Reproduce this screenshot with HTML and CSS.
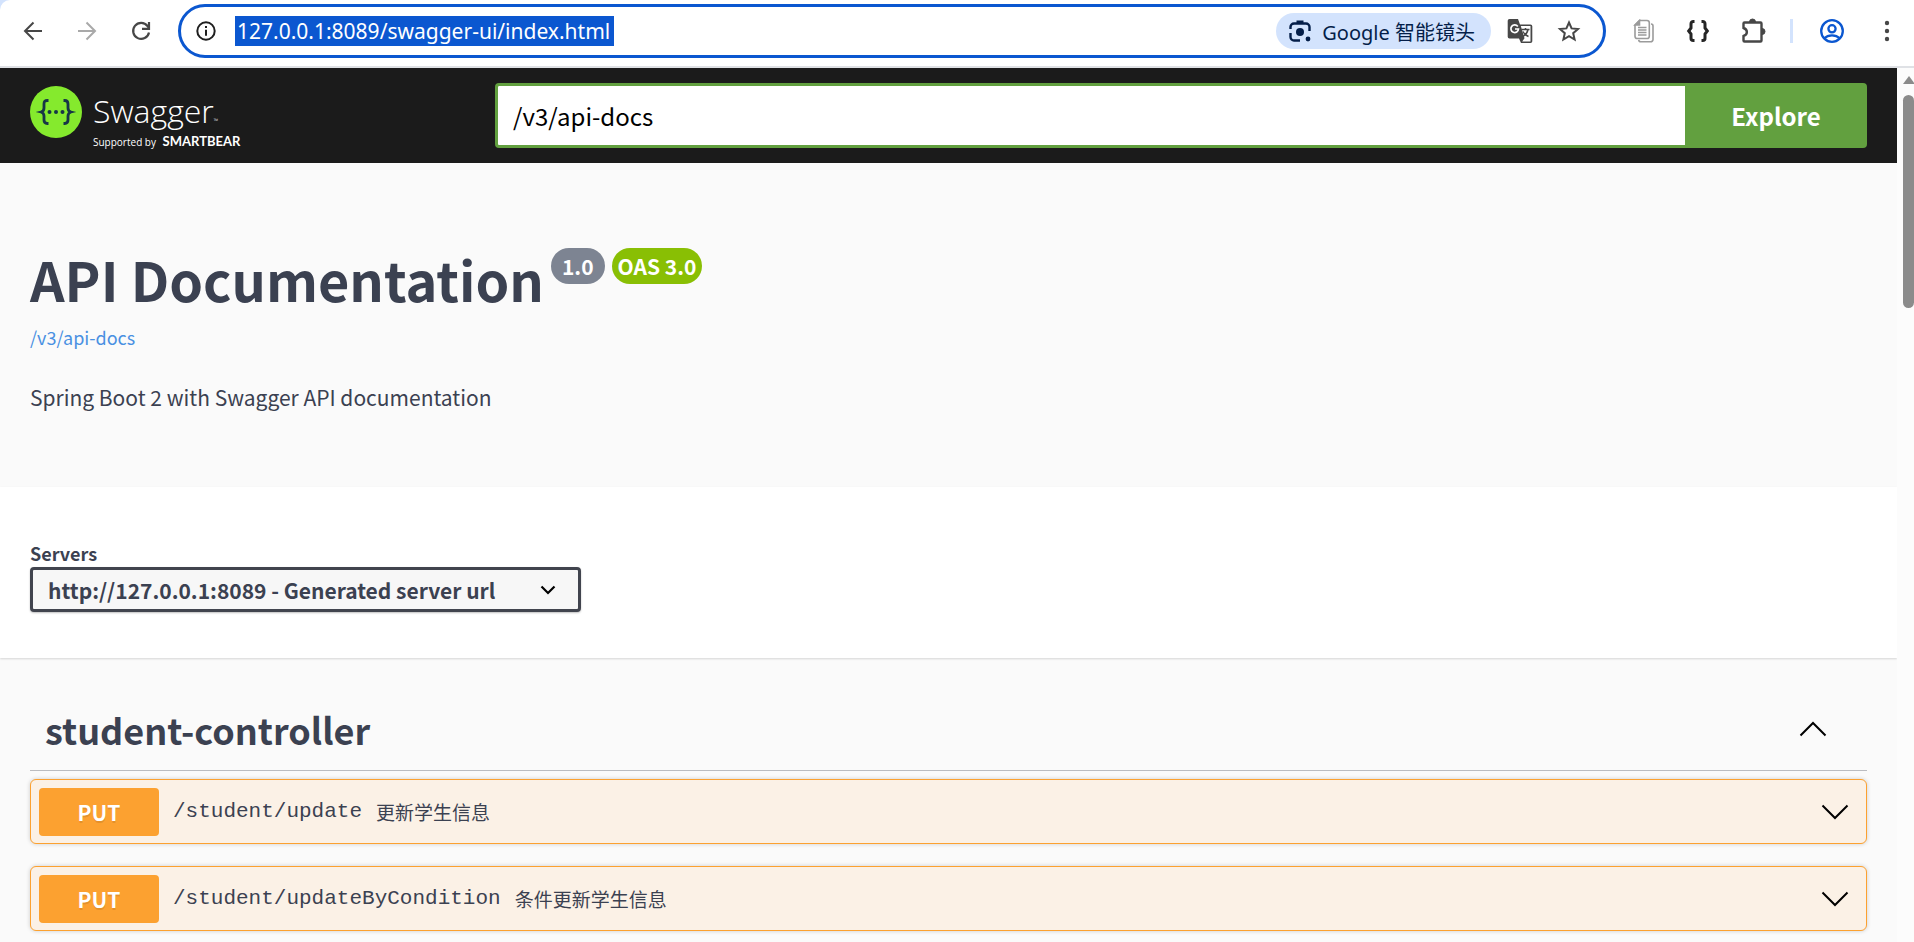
FILE: index.html
```html
<!DOCTYPE html>
<html lang="en">
<head>
    <meta charset="UTF-8">
    <meta name="viewport" content="width=device-width, initial-scale=1.0">
    <title>Swagger UI</title>
    <link rel="stylesheet" href="styles.css">
</head>
<body>

    <header class="browser-bar">
        <div class="nav">
            <button type="button" aria-label="Back">
                <svg width="22" height="22" viewBox="0 0 22 22" fill="none" stroke="#474747" stroke-width="2"><path d="M20 11H3M11.500 2.500L3 11l8.500 8.500"/></svg>
            </button>
            <button type="button" aria-label="Forward" disabled>
                <svg width="22" height="22" viewBox="0 0 22 22" fill="none" stroke="#a9a9a9" stroke-width="2"><path d="M2 11h17M10.500 2.500L19 11l-8.500 8.500"/></svg>
            </button>
            <button type="button" aria-label="Reload">
                <svg width="22" height="22" viewBox="0 0 22 22" fill="none" stroke="#474747" stroke-width="2.200"><path d="M19 12.500A8 8 0 1 1 17.500 6L19 8"/><path d="M19 2v6.800h-7"/></svg>
            </button>
        </div>

        <div class="omnibox">
            <svg width="22" height="22" viewBox="0 0 22 22" fill="none" stroke="#1f1f1f" stroke-width="2"><circle cx="11" cy="11" r="8.700"/><path d="M11 9.800v6M11 6v2"/></svg>
            <input type="text" class="url" value="127.0.0.1:8089/swagger-ui/index.html" aria-label="Address">
            <button type="button" class="lens">
                <svg width="24" height="24" viewBox="0 0 24 24" fill="none" stroke="#041e49" stroke-width="2.400"><path d="M2.500 10V8A3.500 3.500 0 0 1 6 4.500h12A3.500 3.500 0 0 1 21.500 8v4M2.500 14v4A3.500 3.500 0 0 0 6 21.500h6"/><path d="M8.500 3h7" stroke-width="3"/><circle cx="12" cy="13" r="4" fill="#041e49" stroke="none"/><circle cx="20" cy="20" r="2.400" fill="#041e49" stroke="none"/></svg>
                <span>Google 智能镜头</span>
            </button>
            <button type="button" aria-label="Translate this page">
                <svg width="26" height="26" viewBox="0 0 26 26" fill="none"><path d="M2.500 1h8.500l2 5.500h10.500a1.800 1.800 0 0 1 1.800 1.800v14.900a1.800 1.800 0 0 1-1.800 1.800H14l-2-4.500H2.500a1.800 1.800 0 0 1-1.800-1.800V2.800A1.800 1.800 0 0 1 2.500 1z" fill="#474747"/><path d="M13.800 8h9.700v15.500h-8.300l2.300-3.200z" fill="#fff"/><path d="M10.800 8.500A3.800 3.800 0 1 0 11.500 11H8" stroke="#fff" stroke-width="1.700"/><path d="M14.500 11.500h8M18.500 10v1.500M21 11.500c-.6 3-2.500 5.500-5 7M16 13.500c1 2 3 4 5.500 5" stroke="#474747" stroke-width="1.500"/></svg>
            </button>
            <button type="button" aria-label="Bookmark this page">
                <svg width="24" height="24" viewBox="0 0 24 24" fill="none" stroke="#474747" stroke-width="2"><path d="M12 3.500l2.600 5.900 6.400.6-4.800 4.200 1.400 6.300L12 17.200l-5.600 3.300 1.400-6.300L3 10l6.400-.6z"/></svg>
            </button>
        </div>

        <div class="actions">
            <button type="button" aria-label="Copy pages">
                <svg width="24" height="24" viewBox="0 0 24 24" fill="none" stroke="#9b9b9b" stroke-width="1.600"><path d="M7.500 1.500H15A2.300 2.300 0 0 1 17.300 3.800v13.400A2.300 2.300 0 0 1 15 19.500H5.300A2.300 2.300 0 0 1 3 17.200V6z"/><path d="M3 6l4.500-4.500V6z" fill="#9b9b9b"/><path d="M6 8.500h8.500M6 11h8.500M6 13.500h8.500M6 16h8.500" stroke-width="1.300"/><path d="M19 5a2 2 0 0 1 2 2v13.500a2.300 2.300 0 0 1-2.300 2.300H9a2.300 2.300 0 0 1-2.300-2"/></svg>
            </button>
            <button type="button" aria-label="JSON viewer">
                <svg width="24" height="24" viewBox="0 0 24 24" fill="none" stroke="#252525" stroke-width="3"><path d="M8.500 2.500H7.300A2.300 2.300 0 0 0 5 4.800V9l-2.300 3L5 15v4.200a2.300 2.300 0 0 0 2.300 2.300h1.200M15.500 2.500h1.200A2.300 2.300 0 0 1 19 4.800V9l2.300 3L19 15v4.200a2.300 2.300 0 0 1-2.300 2.300h-1.200"/></svg>
            </button>
            <button type="button" aria-label="Extensions">
                <svg width="26" height="26" viewBox="0 0 26 26" fill="none" stroke="#474747" stroke-width="2.400"><path d="M4.500 4.500h16a1 1 0 0 1 1 1v17a1 1 0 0 1-1 1h-16a1 1 0 0 1-1-1V18c4.500-1.500 4.500-6.500 0-8V5.500a1 1 0 0 1 1-1z"/><path d="M9.500 4a3 3 0 0 1 6 0zM22 10.500a3 3 0 0 1 0 6z" fill="#474747" stroke-width="1"/></svg>
            </button>
            <span class="divider"></span>
            <button type="button" class="profile" aria-label="Profile">
                <svg width="26" height="26" viewBox="0 0 26 26" fill="none" stroke="#0b57d0" stroke-width="2.300"><circle cx="13" cy="13" r="10.800"/><circle cx="13" cy="10.800" r="3.600"/><path d="M5 20.500c4.500-4.200 11.500-4.200 16 0"/></svg>
            </button>
            <button type="button" aria-label="Menu">
                <svg width="24" height="24" viewBox="0 0 24 24" fill="#474747"><circle cx="12" cy="4" r="2.200"/><circle cx="12" cy="12" r="2.200"/><circle cx="12" cy="20" r="2.200"/></svg>
            </button>
        </div>
    </header>

    <div class="viewport">
        <main>
            <div class="topbar">
                <a class="logo" href="/">
                    <svg width="52" height="52" viewBox="0 0 52 52" fill="none"><circle cx="26" cy="26" r="26" fill="#85ea2d"/><path d="M18.500 14.500h-1.200c-2.300 0-3.300 1.100-3.300 3.400v4c0 2.300-.8 3.500-3 4.100 2.200.6 3 1.800 3 4.100v4c0 2.300 1 3.400 3.300 3.400h1.200M33.500 14.500h1.200c2.300 0 3.300 1.100 3.300 3.400v4c0 2.300.8 3.500 3 4.100-2.200.6-3 1.800-3 4.100v4c0 2.300-1 3.400-3.300 3.400h-1.200" stroke="#173647" stroke-width="2.800"/><g fill="#173647"><circle cx="19.500" cy="26" r="2"/><circle cx="26" cy="26" r="2"/><circle cx="32.500" cy="26" r="2"/></g></svg>
                    <span class="wordmark">
                        <span class="name">Swagger<small>™</small></span>
                        <span class="by">Supported by <b>SMARTBEAR</b></span>
                    </span>
                </a>
                <form class="download-url">
                    <input type="text" value="/v3/api-docs" aria-label="API definition">
                    <button type="button">Explore</button>
                </form>
            </div>

            <section class="info">
                <div class="title">
                    <h1>API Documentation</h1>
                    <span class="badge">1.0</span>
                    <span class="badge oas">OAS 3.0</span>
                </div>
                <a href="/v3/api-docs">/v3/api-docs</a>
                <p>Spring Boot 2 with Swagger API documentation</p>
            </section>

            <section class="servers">
                <label for="servers">Servers</label>
                <div class="select-wrap">
                    <select id="servers">
                        <option>http://127.0.0.1:8089 - Generated server url</option>
                    </select>
                    <svg width="16" height="10" viewBox="0 0 16 10" fill="none" stroke="#000" stroke-width="2.200"><path d="M1.500 1.500L8 8l6.500-6.500"/></svg>
                </div>
            </section>

            <section class="operations">
                <div class="tag">
                    <h2>student-controller</h2>
                    <button type="button" aria-label="Collapse student-controller">
                        <svg width="28" height="16" viewBox="0 0 28 16" fill="none" stroke="#000" stroke-width="2"><path d="M1.500 14.500L14 2l12.500 12.500"/></svg>
                    </button>
                </div>

                <div class="opblock">
                    <span class="method">PUT</span>
                    <a class="path" href="#update">/student/update</a>
                    <span class="summary">更新学生信息</span>
                    <button type="button" aria-label="Expand update">
                        <svg width="28" height="16" viewBox="0 0 28 16" fill="none" stroke="#000" stroke-width="2"><path d="M1.500 1.500L14 14 26.500 1.500"/></svg>
                    </button>
                </div>

                <div class="opblock">
                    <span class="method">PUT</span>
                    <a class="path" href="#updateByCondition">/student/updateByCondition</a>
                    <span class="summary">条件更新学生信息</span>
                    <button type="button" aria-label="Expand updateByCondition">
                        <svg width="28" height="16" viewBox="0 0 28 16" fill="none" stroke="#000" stroke-width="2"><path d="M1.500 1.500L14 14 26.500 1.500"/></svg>
                    </button>
                </div>
            </section>
        </main>

        <div class="scrollbar">
            <svg width="11" height="8" viewBox="0 0 11 8"><path d="M0 8L6 0l6 8z" fill="#8b8b8b"/></svg>
            <div class="thumb"></div>
        </div>
    </div>

</body>
</html>
```

FILE: styles.css
```css
* {
    box-sizing: border-box;
}
body {
    margin: 0;
    height: 100vh;
    display: flex;
    flex-direction: column;
    overflow: hidden;
    background: #d3e3fd;
    color: #3b4151;
    font-family: "Noto Sans CJK SC", sans-serif;
}
button {
    padding: 0;
    border: none;
    background: none;
    font-family: inherit;
    cursor: pointer;
}
svg {
    display: block;
    flex-shrink: 0;
}
a {
    text-decoration: none;
}

/* browser bar */
.browser-bar {
    display: flex;
    flex-shrink: 0;
    align-items: center;
    height: 68px;
    padding: 0 15px 4px 22px;
    background: #fff;
    border-bottom: 2px solid #dfe1e5;
    border-top-left-radius: 10px;
}
.nav {
    display: flex;
    gap: 32px;
    margin-right: 26px;
}
.omnibox {
    display: flex;
    flex: 1;
    align-items: center;
    height: 54px;
    padding: 0 22px 0 14px;
    border: 3px solid #0b57d0;
    border-radius: 27px;
}
.url {
    field-sizing: content;
    height: 30px;
    margin: 0 auto 0 18px;
    padding: 0 4px 0 2px;
    border: none;
    outline: none;
    background: #0b57d0;
    color: #fff;
    font-family: "Noto Sans", sans-serif;
    font-size: 21px;
}
.lens {
    display: flex;
    align-items: center;
    gap: 10px;
    height: 36px;
    margin-right: 16px;
    padding: 0 16px 0 12px;
    border-radius: 18px;
    background: #d3e3fd;
    color: #041e49;
    font-family: "Noto Sans", "Noto Sans CJK SC", sans-serif;
    font-size: 20px;
}
.lens + button {
    margin-right: 24px;
}
.actions {
    display: flex;
    align-items: center;
    gap: 30px;
    margin-left: 26px;
}
.divider {
    width: 3px;
    height: 24px;
    margin-left: -6px;
    background: #d3e3fd;
}
.profile {
    margin-left: -4px;
}

.viewport {
    display: flex;
    flex: 1;
    min-height: 0;
}
main {
    flex: 1;
    overflow: hidden;
    background: #fafafa;
}
.scrollbar {
    display: flex;
    flex-direction: column;
    align-items: flex-end;
    width: 17px;
    padding-top: 8px;
    background: #fcfcfc;
}
.thumb {
    width: 11px;
    height: 213px;
    margin-top: 11px;
    border-radius: 6px;
    background: #8b8b8b;
}

/* top bar */
.topbar {
    display: flex;
    align-items: center;
    height: 95px;
    padding: 0 30px;
    background: #1b1b1b;
}
.logo {
    display: flex;
    flex: 0 0 465px;
    gap: 11px;
    height: 60px;
    color: #fff;
    font-family: "Open Sans", sans-serif;
}
.wordmark {
    display: flex;
    flex-direction: column;
    padding-top: 10px;
}
.name {
    font-size: 32px;
    font-weight: 300;
    line-height: 30px;
}
.name small {
    font-size: 6px;
}
.by {
    font-size: 10px;
    line-height: 10px;
}
.by b {
    margin-left: 4px;
    font-family: Lato, sans-serif;
    font-size: 13px;
}
.download-url {
    display: flex;
    flex: 1;
    height: 65px;
}
.download-url input {
    flex: 1;
    padding: 0 15px;
    border: 3px solid #62a03f;
    border-right: none;
    border-radius: 4px 0 0 4px;
    outline: none;
    background: #fff;
    color: #000;
    font-family: inherit;
    font-size: 24px;
}
.download-url button {
    width: 182px;
    border-radius: 0 4px 4px 0;
    background: #62a03f;
    color: #fff;
    font-size: 24px;
    font-weight: bold;
}

/* info */
.info {
    height: 324px;
    padding: 80px 30px 0;
}
.title {
    display: flex;
    align-items: flex-start;
}
h1 {
    margin: 0 7px 0 0;
    font-size: 54px;
    line-height: 72px;
}
.badge {
    margin: 5px 7px 0 0;
    padding: 0 11px;
    border-radius: 18px;
    background: #7d8492;
    color: #fff;
    font-size: 21px;
    font-weight: bold;
    line-height: 36px;
}
.badge.oas {
    padding: 0 6px;
    background: #89bf04;
}
.info a {
    display: block;
    color: #4990e2;
    font-size: 18px;
    line-height: 44px;
}
.info p {
    margin: 18px 0 0;
    font-size: 21px;
    line-height: 40px;
}

/* servers */
.servers {
    height: 171px;
    padding: 54px 30px 0;
    background: #fff;
    box-shadow: 0 1px 2px rgba(0, 0, 0, 0.15);
}
.servers label {
    display: block;
    padding-bottom: 2px;
    font-size: 18px;
    font-weight: bold;
    line-height: 24px;
}
.select-wrap {
    position: relative;
    width: 551px;
}
.select-wrap select {
    width: 100%;
    height: 45px;
    padding: 0 15px;
    border: 3px solid #41444e;
    border-radius: 4px;
    appearance: none;
    background: #f7f7f7;
    box-shadow: 0 1px 2px rgba(0, 0, 0, 0.25);
    color: #3b4151;
    font-family: inherit;
    font-size: 21px;
    font-weight: bold;
}
.select-wrap svg {
    position: absolute;
    top: 18px;
    right: 25px;
}

/* operations */
.operations {
    padding: 30px 30px 0;
}
.tag {
    display: flex;
    align-items: center;
    justify-content: space-between;
    height: 83px;
    margin-bottom: 8px;
    padding: 0 40px 0 15px;
    border-bottom: 1px solid #bbbcc0;
}
.tag h2 {
    margin: 0;
    font-size: 36px;
    line-height: 60px;
}
.opblock {
    display: flex;
    align-items: center;
    height: 65px;
    margin-bottom: 22px;
    padding: 0 17px 0 8px;
    border: 1px solid #fca130;
    border-radius: 6px;
    background: #fbf1e6;
    box-shadow: 0 0 4px rgba(0, 0, 0, 0.19);
}
.method {
    width: 120px;
    border-radius: 4px;
    background: #fca130;
    color: #fff;
    font-size: 21px;
    font-weight: bold;
    line-height: 48px;
    text-align: center;
    text-shadow: 0 2px 0 rgba(0, 0, 0, 0.1);
}
.path {
    margin: 0 14px;
    color: #3b4151;
    font-family: "Liberation Mono", monospace;
    font-size: 21px;
}
.summary {
    flex: 1;
    font-size: 19px;
}
```
